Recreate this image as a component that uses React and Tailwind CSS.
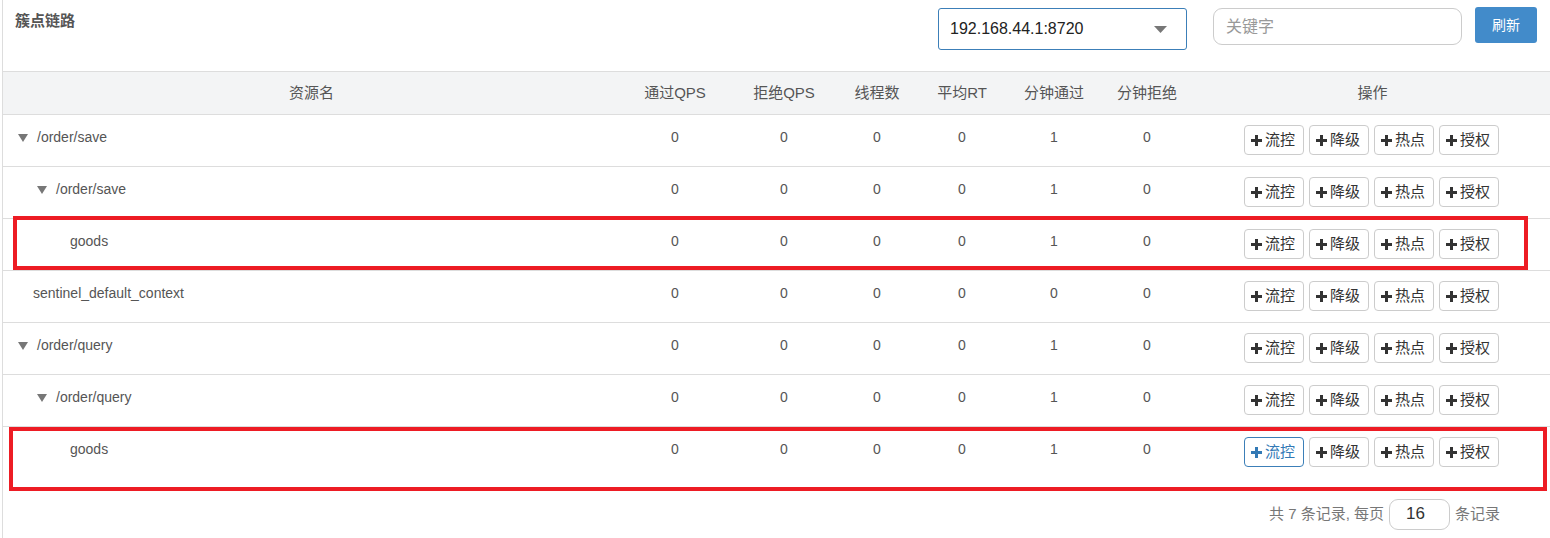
import React from 'react';

const rows = [
  { name: '/order/save', pad: 'pl-[15px]', caret: true, vals: [0, 0, 0, 0, 1, 0] },
  { name: '/order/save', pad: 'pl-[34px]', caret: true, vals: [0, 0, 0, 0, 1, 0] },
  { name: 'goods', pad: 'pl-[67px]', caret: false, vals: [0, 0, 0, 0, 1, 0] },
  { name: 'sentinel_default_context', pad: 'pl-[30px]', caret: false, vals: [0, 0, 0, 0, 0, 0] },
  { name: '/order/query', pad: 'pl-[15px]', caret: true, vals: [0, 0, 0, 0, 1, 0] },
  { name: '/order/query', pad: 'pl-[34px]', caret: true, vals: [0, 0, 0, 0, 1, 0] },
  { name: 'goods', pad: 'pl-[67px]', caret: false, vals: [0, 0, 0, 0, 1, 0], active: true },
];

const headers = ['通过QPS', '拒绝QPS', '线程数', '平均RT', '分钟通过', '分钟拒绝'];
const colWidths = ['w-[110px]', 'w-[108px]', 'w-[78px]', 'w-[92px]', 'w-[92px]', 'w-[94px]'];
const actions = ['流控', '降级', '热点', '授权'];

const Plus = ({ color }) => (
  <svg width="11" height="11" viewBox="0 0 11 11" className="shrink-0">
    <path d="M4 0h3v4h4v3H7v4H4V7H0V4h4z" fill={color} />
  </svg>
);

const Caret = () => (
  <svg width="10" height="8" viewBox="0 0 10 8" className="shrink-0 mt-[2px]">
    <path d="M0 0h10L5 8z" fill="#777" />
  </svg>
);

const ActionButton = ({ label, active }) => (
  <button
    type="button"
    className={
      active
        ? 'flex items-center gap-[3px] h-[30px] w-[60px] pl-[6px] rounded-[4px] border border-[#3c7fb8] bg-white text-[15px] text-[#3379b5]'
        : 'flex items-center gap-[3px] h-[30px] w-[60px] pl-[6px] rounded-[4px] border border-[#ccc] bg-white text-[15px] text-[#333]'
    }
  >
    <Plus color={active ? '#3379b5' : '#333'} />
    <span>{label}</span>
  </button>
);

const App = () => {
  return (
    <div
      className="relative w-[1550px] h-[538px] bg-white overflow-hidden"
      style={{ fontFamily: '"Liberation Sans", "Noto Sans CJK SC", sans-serif' }}
    >
      <div className="ml-[2px] h-full border-l border-[#ddd]">
        <div className="flex h-[71px] items-start">
          <h1 className="ml-[12px] mt-[10px] text-[15px] font-bold text-[#555]">簇点链路</h1>
          <div className="ml-auto flex items-start">
            <div className="mt-[8px] flex h-[42px] w-[249px] items-center justify-between rounded-[3px] border border-[#3c7fb8] pl-[11px] pr-[19px] text-[16px] text-[#222]">
              <span>192.168.44.1:8720</span>
              <svg width="13" height="7" viewBox="0 0 13 7">
                <path d="M0 0h13L6.5 7z" fill="#777" />
              </svg>
            </div>
            <input
              type="text"
              placeholder="关键字"
              className="ml-[26px] mt-[8px] h-[37px] w-[249px] rounded-[9px] border border-[#ccc] px-[12px] text-[16px] text-[#333] placeholder-[#999] outline-none"
            />
            <button
              type="button"
              className="ml-[13px] mr-[13px] mt-[7px] h-[36px] w-[62px] rounded-[3px] bg-[#428bca] text-[14px] text-white"
            >
              刷新
            </button>
          </div>
        </div>

        <table className="w-[1548px] table-fixed border-collapse text-[14px] text-[#555]">
          <thead>
            <tr className="h-[43px] bg-[#f3f4f5] border-t border-b border-[#ddd]">
              <th className="w-[617px] text-center font-normal text-[15px]">资源名</th>
              {headers.map((h, i) => (
                <th key={h} className={`${colWidths[i]} text-center font-normal text-[15px]`}>
                  {h}
                </th>
              ))}
              <th className="text-center font-normal text-[15px]">操作</th>
            </tr>
          </thead>
          <tbody>
            {rows.map((r, idx) => (
              <tr
                key={idx}
                className={idx === rows.length - 1 ? 'h-[52px] align-top' : 'h-[52px] border-b border-[#ddd] align-top'}
              >
                <td className={`${r.pad} pt-[12px]`}>
                  <div className="flex items-center gap-[9px] leading-[20px]">
                    {r.caret && <Caret />}
                    <span>{r.name}</span>
                  </div>
                </td>
                {r.vals.map((v, i) => (
                  <td key={i} className="pt-[12px] text-center leading-[20px]">
                    {v}
                  </td>
                ))}
                <td className="pt-[10px]">
                  <div className="flex justify-center gap-[5px] pr-[2px]">
                    {actions.map((a, i) => (
                      <ActionButton key={a} label={a} active={r.active && i === 0} />
                    ))}
                  </div>
                </td>
              </tr>
            ))}
          </tbody>
        </table>

        <div className="mt-[20px] flex items-center justify-end pr-[50px] text-[15px] text-[#777]">
          <span>共 7 条记录, 每页</span>
          <div className="mx-[5px] flex h-[31px] w-[61px] items-center rounded-[9px] border border-[#ccc] pl-[16px] text-[17px] text-[#333]">
            16
          </div>
          <span>条记录</span>
        </div>
      </div>

      <div className="absolute left-[13px] top-[216px] w-[1515px] h-[54px] border-[4px] border-[#ed1c24]" />
      <div className="absolute left-[9px] top-[427px] w-[1538px] h-[64px] border-[4px] border-[#ed1c24]" />
    </div>
  );
};

export default App;
